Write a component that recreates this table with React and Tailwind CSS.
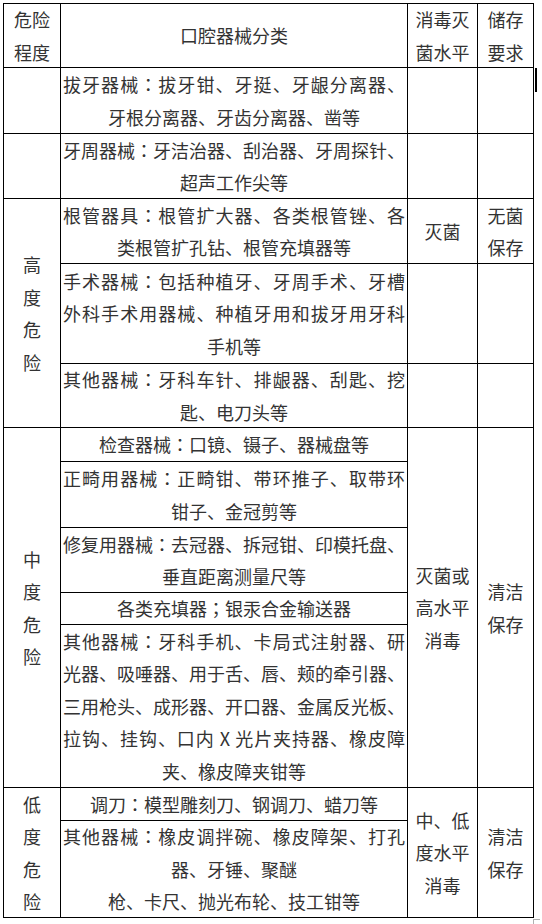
import React from "react";

const FULL = "whitespace-nowrap text-justify [text-align-last:justify]";
const CEN = "whitespace-nowrap text-center";

function Txt({ s }) {
  const parts = s.split(/([：；])/);
  return (
    <>
      {parts.map((p, i) =>
        p === "：" || p === "；" ? (
          <span key={i} style={{ fontFamily: '"Noto Sans CJK TC", sans-serif' }}>
            {p}
          </span>
        ) : (
          <React.Fragment key={i}>{p}</React.Fragment>
        )
      )}
    </>
  );
}

function Lines({ lines }) {
  return (
    <div className="w-full px-[2px]">
      {lines.map((l, i) => (
        <div key={i} className={l[1] ? FULL : CEN}>
          <Txt s={l[0]} />
        </div>
      ))}
    </div>
  );
}

function Stack({ chars }) {
  return (
    <div className="flex flex-col items-center">
      {chars.map((c, i) => (
        <div key={i}>{c}</div>
      ))}
    </div>
  );
}

const cell = "bg-white flex items-center justify-center";

export default function App() {
  return (
    <div
      className="relative w-[542px] h-[924px] bg-white text-[#333333] text-[18px] leading-[32.5px] overflow-hidden"
      style={{ fontFamily: '"Noto Sans CJK SC", "Noto Sans", sans-serif' }}
    >
      <div className="ml-[3px] pt-[3px]">
        <div className="grid w-[531px] bg-black p-px gap-px grid-cols-[56px_346px_69px_55px] grid-rows-[63px_65px_64px_64px_99px_63px_33px_65px_64px_31px_162px_32px_96px]">
          {/* header */}
          <div className={`${cell} col-start-1 row-start-1`}>
            <Stack chars={["危险", "程度"]} />
          </div>
          <div className={`${cell} col-start-2 row-start-1`}>口腔器械分类</div>
          <div className={`${cell} col-start-3 row-start-1`}>
            <Stack chars={["消毒灭", "菌水平"]} />
          </div>
          <div className={`${cell} col-start-4 row-start-1`}>
            <Stack chars={["储存", "要求"]} />
          </div>

          {/* row 1 */}
          <div className={`${cell} col-start-1 row-start-2`}></div>
          <div className={`${cell} col-start-2 row-start-2`}>
            <Lines
              lines={[
                ["拔牙器械：拔牙钳、牙挺、牙龈分离器、", true],
                ["牙根分离器、牙齿分离器、凿等", false],
              ]}
            />
          </div>
          <div className={`${cell} col-start-3 row-start-2`}></div>
          <div className={`${cell} col-start-4 row-start-2`}></div>

          {/* row 2 */}
          <div className={`${cell} col-start-1 row-start-3`}></div>
          <div className={`${cell} col-start-2 row-start-3`}>
            <Lines
              lines={[
                ["牙周器械：牙洁治器、刮治器、牙周探针、", true],
                ["超声工作尖等", false],
              ]}
            />
          </div>
          <div className={`${cell} col-start-3 row-start-3`}></div>
          <div className={`${cell} col-start-4 row-start-3`}></div>

          {/* high risk group */}
          <div className={`${cell} col-start-1 row-start-4 row-span-3`}>
            <Stack chars={["高", "度", "危", "险"]} />
          </div>
          <div className={`${cell} col-start-2 row-start-4`}>
            <Lines
              lines={[
                ["根管器具：根管扩大器、各类根管锉、各", true],
                ["类根管扩孔钻、根管充填器等", false],
              ]}
            />
          </div>
          <div className={`${cell} col-start-3 row-start-4`}>灭菌</div>
          <div className={`${cell} col-start-4 row-start-4`}>
            <Stack chars={["无菌", "保存"]} />
          </div>

          <div className={`${cell} col-start-2 row-start-5`}>
            <Lines
              lines={[
                ["手术器械：包括种植牙、牙周手术、牙槽", true],
                ["外科手术用器械、种植牙用和拔牙用牙科", true],
                ["手机等", false],
              ]}
            />
          </div>
          <div className={`${cell} col-start-3 row-start-5`}></div>
          <div className={`${cell} col-start-4 row-start-5`}></div>

          <div className={`${cell} col-start-2 row-start-6`}>
            <Lines
              lines={[
                ["其他器械：牙科车针、排龈器、刮匙、挖", true],
                ["匙、电刀头等", false],
              ]}
            />
          </div>
          <div className={`${cell} col-start-3 row-start-6`}></div>
          <div className={`${cell} col-start-4 row-start-6`}></div>

          {/* medium risk group */}
          <div className={`${cell} col-start-1 row-start-7 row-span-5`}>
            <Stack chars={["中", "度", "危", "险"]} />
          </div>
          <div className={`${cell} col-start-2 row-start-7`}>
            <Lines lines={[["检查器械：口镜、镊子、器械盘等", false]]} />
          </div>
          <div className={`${cell} col-start-2 row-start-8`}>
            <Lines
              lines={[
                ["正畸用器械：正畸钳、带环推子、取带环", true],
                ["钳子、金冠剪等", false],
              ]}
            />
          </div>
          <div className={`${cell} col-start-2 row-start-9`}>
            <Lines
              lines={[
                ["修复用器械：去冠器、拆冠钳、印模托盘、", true],
                ["垂直距离测量尺等", false],
              ]}
            />
          </div>
          <div className={`${cell} col-start-2 row-start-10`}>
            <Lines lines={[["各类充填器；银汞合金输送器", false]]} />
          </div>
          <div className={`${cell} col-start-2 row-start-11`}>
            <Lines
              lines={[
                ["其他器械：牙科手机、卡局式注射器、研", true],
                ["光器、吸唾器、用于舌、唇、颊的牵引器、", true],
                ["三用枪头、成形器、开口器、金属反光板、", true],
                ["拉钩、挂钩、口内 X 光片夹持器、橡皮障", true],
                ["夹、橡皮障夹钳等", false],
              ]}
            />
          </div>
          <div className={`${cell} col-start-3 row-start-7 row-span-5`}>
            <Stack chars={["灭菌或", "高水平", "消毒"]} />
          </div>
          <div className={`${cell} col-start-4 row-start-7 row-span-5`}>
            <Stack chars={["清洁", "保存"]} />
          </div>

          {/* low risk group */}
          <div className={`${cell} col-start-1 row-start-12 row-span-2`}>
            <Stack chars={["低", "度", "危", "险"]} />
          </div>
          <div className={`${cell} col-start-2 row-start-12`}>
            <Lines lines={[["调刀：模型雕刻刀、钢调刀、蜡刀等", false]]} />
          </div>
          <div className={`${cell} col-start-2 row-start-13`}>
            <Lines
              lines={[
                ["其他器械：橡皮调拌碗、橡皮障架、打孔", true],
                ["器、牙锤、聚醚", false],
                ["枪、卡尺、抛光布轮、技工钳等", false],
              ]}
            />
          </div>
          <div className={`${cell} col-start-3 row-start-12 row-span-2`}>
            <Stack chars={["中、低", "度水平", "消毒"]} />
          </div>
          <div className={`${cell} col-start-4 row-start-12 row-span-2`}>
            <Stack chars={["清洁", "保存"]} />
          </div>
        </div>
      </div>

      {/* text cursor bar */}
      <div className="absolute left-[535px] top-[68px] w-[2px] h-[24px] bg-black"></div>
      {/* corner mark */}
      <div className="absolute left-[533px] top-[919px] w-[7px] h-[6px] border-t border-l border-[#b0b0b0]"></div>
    </div>
  );
}
